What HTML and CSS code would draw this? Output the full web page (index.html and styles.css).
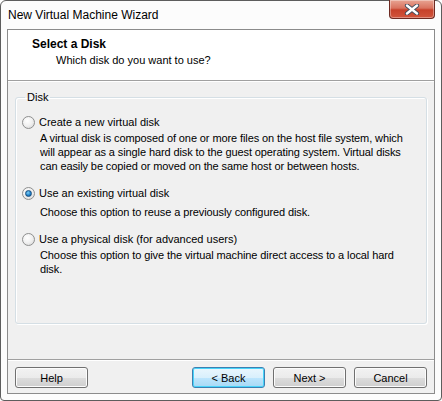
FILE: index.html
```html
<!DOCTYPE html>
<html>
<head>
	<meta charset="UTF-8">
	<title>New Virtual Machine Wizard</title>
	<link rel="stylesheet" href="styles.css">
</head>
<body>
	<div class="window">
		<div class="titlebar">
			<span class="caption">New Virtual Machine Wizard</span>
			<div class="close">
				<svg width="18" height="11" viewBox="0 0 18 11">
					<path d="M4 1.5 L14 9.5 M14 1.5 L4 9.5" stroke="#3b4a5c" stroke-width="4.2" stroke-linecap="round"/>
					<path d="M4 1.5 L14 9.5 M14 1.5 L4 9.5" stroke="#ffffff" stroke-width="2.4" stroke-linecap="round"/>
				</svg>
			</div>
		</div>

		<div class="client">
			<div class="header">
				<div class="header-title">Select a Disk</div>
				<div class="header-sub">Which disk do you want to use?</div>
			</div>

			<div class="content">
				<fieldset class="group">
					<legend>Disk</legend>

					<div class="option">
						<span class="radio"></span>
						<span>Create a new virtual disk</span>
					</div>
					<div class="desc">
						A virtual disk is composed of one or more files on the host file system, which<br>
						will appear as a single hard disk to the guest operating system. Virtual disks<br>
						can easily be copied or moved on the same host or between hosts.
					</div>

					<div class="option">
						<span class="radio checked"></span>
						<span>Use an existing virtual disk</span>
					</div>
					<div class="desc desc-wide">
						Choose this option to reuse a previously configured disk.
					</div>

					<div class="option">
						<span class="radio"></span>
						<span>Use a physical disk (for advanced users)</span>
					</div>
					<div class="desc">
						Choose this option to give the virtual machine direct access to a local hard<br>
						disk.
					</div>
				</fieldset>
			</div>

			<div class="footer">
				<button class="btn">Help</button>
				<div class="spacer"></div>
				<button class="btn default">&lt; Back</button>
				<button class="btn">Next &gt;</button>
				<button class="btn">Cancel</button>
			</div>
		</div>
	</div>
</body>
</html>
```

FILE: styles.css
```css
body { margin: 0; background: #fff; font-family: "Liberation Sans", Arial, sans-serif; font-size: 11px; color: #000; }

.window {
	width: 442px; height: 401px; box-sizing: border-box;
	border: 1px solid #5d5d5d; border-radius: 6px 6px 4px 4px;
	background: #fcfcfc;
	display: flex; flex-direction: column;
}

.titlebar { height: 28px; display: flex; justify-content: space-between; align-items: flex-start; padding-left: 7px; }
.caption { line-height: 28px; font-size: 12px; }
.close {
	width: 44px; height: 18px; margin-top: -1px; margin-right: 6px;
	border: 1px solid #6d2a22; border-top: none; border-radius: 0 0 4px 4px;
	background: linear-gradient(#e8a493, #d9735f 45%, #c7412a 55%, #d1553d);
	box-shadow: inset 0 0 0 1px rgba(255,255,255,0.35);
	display: flex; align-items: center; justify-content: center;
}

.client {
	flex: 1; margin: 0 6px 6px;
	border: 1px solid #8b8b8b; background: #f0f0f0;
	display: flex; flex-direction: column;
}

.header { height: 51px; background: #fff; border-bottom: 1px solid #a0a0a0; box-shadow: 0 1px #fff; padding-left: 24px; box-sizing: border-box; }
.header-title { font-weight: bold; font-size: 12px; line-height: 14px; margin-top: 7px; }
.header-sub { line-height: 14px; margin-top: 2px; padding-left: 24px; }

.content { flex: 1; padding: 9px 7px 0; }
.group {
	margin: 0; padding: 11px 0 34px 6px;
	border: 1px solid #d5dfe5; border-radius: 3px;
	box-shadow: inset 1px 1px #fff, 1px 1px #fff;
}
.group legend { padding: 0 2px; margin-left: 3px; line-height: 14px; }

.option { display: flex; align-items: center; gap: 4px; height: 14px; }
.desc { padding-left: 18px; line-height: 14px; margin: 2px 0 13px; letter-spacing: -0.1px; }
.desc-wide { margin-top: 5px; }

.radio {
	width: 11px; height: 11px; border-radius: 50%;
	border: 1px solid #8e8f8f;
	background: radial-gradient(circle at 40% 35%, #fff, #f0f0f0 50%, #d2d2d2);
	display: flex; align-items: center; justify-content: center;
}
.radio.checked::after {
	content: ""; width: 5px; height: 5px; border-radius: 50%;
	background: radial-gradient(circle at 40% 35%, #7ed0f8, #1b7cc6 60%, #0c4f8a);
	border: 1px solid #1a4f7e;
}

.footer {
	border-top: 1px solid #a0a0a0; box-shadow: inset 0 1px #fff;
	padding: 7px 7px 5px;
	display: flex; gap: 8px;
}
.spacer { flex: 1; }
.btn {
	width: 73px; height: 21px; padding: 0;
	font-family: inherit; font-size: 11px; color: #000;
	border: 1px solid #707070; border-radius: 3px;
	background: linear-gradient(#f2f2f2, #ebebeb 50%, #dddddd 50%, #cfcfcf);
	box-shadow: inset 0 0 0 1px #fcfcfc;
}
.btn.default {
	border-color: #3c7fb1;
	background: linear-gradient(#eaf6fd, #d9f0fc 50%, #bee6fd 50%, #a7d9f5);
	box-shadow: inset 0 0 0 1px #48d4fa;
}
```
